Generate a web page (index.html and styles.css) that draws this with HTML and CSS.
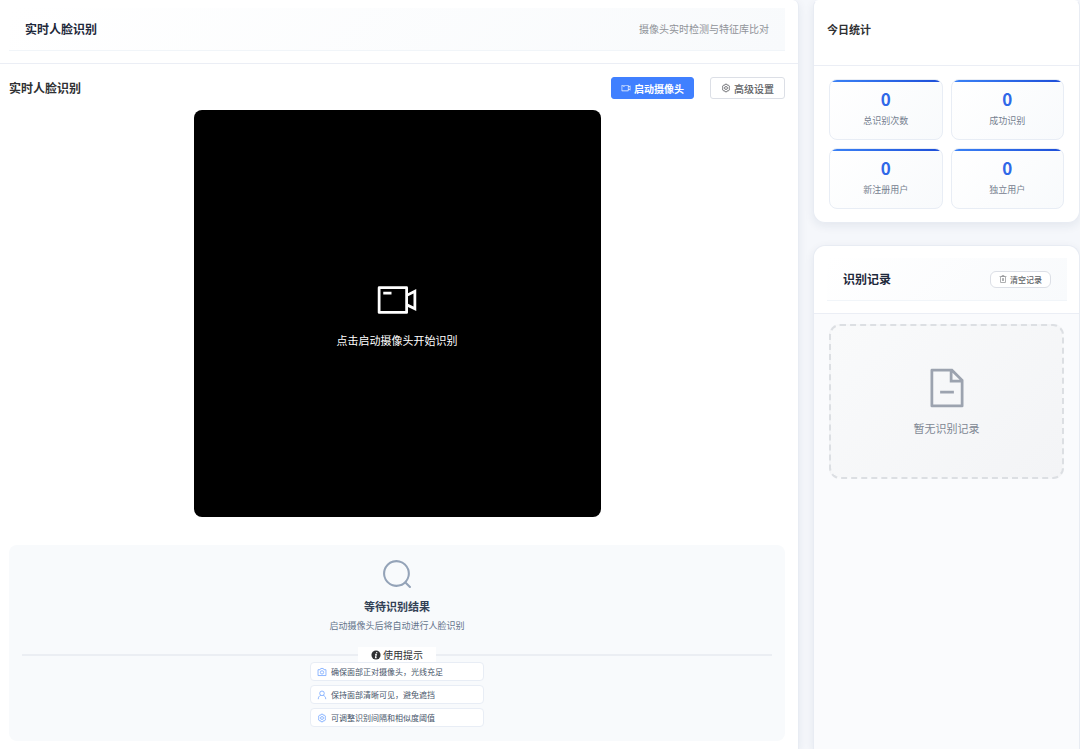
FILE: index.html
```
<!DOCTYPE html>
<html lang="zh-CN">
  <head>
    <meta charset="utf-8" />
    <meta name="viewport" content="width=device-width, initial-scale=1.0" />
    <title>实时人脸识别</title>
    <link rel="stylesheet" href="styles.css">
  </head>

  <body>
    <svg class="sprite" aria-hidden="true">
      <symbol id="icon-camera" viewBox="0 0 1024 1024">
        <path d="M704 768V256H128v512h576zm64-416 192-96v512l-192-96v128a32 32 0 0 1-32 32H96a32 32 0 0 1-32-32V224a32 32 0 0 1 32-32h640a32 32 0 0 1 32 32v128zm0 71.552v176.896l128 64V359.552l-128 64zM192 320h192v64H192v-64z" />
      </symbol>
      <symbol id="icon-setting" viewBox="0 0 24 24">
        <path class="line" d="M9.500 3h5l1 2.500 2.700-.3 2.500 4.300-1.700 2.500 1.700 2.500-2.500 4.300-2.700-.3-1 2.500h-5l-1-2.500-2.700.3-2.500-4.300L5 12 3.300 9.500l2.500-4.300 2.700.3z" />
        <circle class="line" cx="12" cy="12" r="3.500" />
      </symbol>
    </svg>

    <div class="page">
      <main class="card main-card">
        <header class="card-header">
          <div class="header-bar">
            <h1>实时人脸识别</h1>
            <span class="subtitle">摄像头实时检测与特征库比对</span>
          </div>
        </header>

        <div class="main-body">
          <div class="toolbar">
            <h2>实时人脸识别</h2>
            <div class="toolbar-actions">
              <button type="button" class="btn btn-primary">
                <svg class="icon"><use href="#icon-camera" /></svg>启动摄像头
              </button>
              <button type="button" class="btn">
                <svg class="icon"><use href="#icon-setting" /></svg>高级设置
              </button>
            </div>
          </div>

          <div class="video">
            <svg class="icon icon-large"><use href="#icon-camera" /></svg>
            <p>点击启动摄像头开始识别</p>
          </div>

          <section class="result">
            <svg class="icon result-icon" viewBox="0 0 1024 1024">
              <path d="m795.904 750.720 124.992 124.928a32 32 0 0 1-45.248 45.248L750.656 795.904a416 416 0 1 1 45.248-45.248zM480 832a352 352 0 1 0 0-704 352 352 0 0 0 0 704z" />
            </svg>
            <h3>等待识别结果</h3>
            <p class="result-text">启动摄像头后将自动进行人脸识别</p>

            <div class="divider">
              <span class="divider-text">
                <svg class="icon" viewBox="0 0 24 24">
                  <circle cx="12" cy="12" r="11" />
                  <path class="info-mark" d="M14 5l-.5 2.500M10 10.500h2.500L11 18h2.500" />
                </svg>使用提示
              </span>
            </div>

            <ul class="tips">
              <li>
                <svg class="icon" viewBox="0 0 24 24">
                  <path class="line" d="M2.500 6.500h5L9 3.500h6l1.500 3h5v14h-19z" />
                  <circle class="line" cx="12" cy="13" r="4" />
                </svg>确保面部正对摄像头，光线充足
              </li>
              <li>
                <svg class="icon" viewBox="0 0 24 24">
                  <circle class="line" cx="12" cy="8" r="5.500" />
                  <path class="line" d="M3 22c0-5 2.500-8 6-9M21 22c0-5-2.500-8-6-9" />
                </svg>保持面部清晰可见，避免遮挡
              </li>
              <li>
                <svg class="icon"><use href="#icon-setting" /></svg>可调整识别间隔和相似度阈值
              </li>
            </ul>
          </section>
        </div>
      </main>

      <aside class="sidebar">
        <section class="card stats-card">
          <header class="stats-header">
            <h2>今日统计</h2>
          </header>
          <div class="stats">
            <div class="stat"><strong>0</strong><span>总识别次数</span></div>
            <div class="stat"><strong>0</strong><span>成功识别</span></div>
            <div class="stat"><strong>0</strong><span>新注册用户</span></div>
            <div class="stat"><strong>0</strong><span>独立用户</span></div>
          </div>
        </section>

        <section class="card records-card">
          <header class="card-header">
            <div class="header-bar">
              <h2>识别记录</h2>
              <button type="button" class="btn btn-small">
                <svg class="icon" viewBox="0 0 1024 1024">
                  <path d="M160 256H96a32 32 0 0 1 0-64h256V95.936a32 32 0 0 1 32-32h256a32 32 0 0 1 32 32V192h256a32 32 0 1 1 0 64h-64v672a32 32 0 0 1-32 32H192a32 32 0 0 1-32-32V256zm448-64v-64H416v64h192zM224 896h576V256H224v640zm192-128a32 32 0 0 1-32-32V416a32 32 0 0 1 64 0v320a32 32 0 0 1-32 32zm192 0a32 32 0 0 1-32-32V416a32 32 0 0 1 64 0v320a32 32 0 0 1-32 32z" />
                </svg>清空记录
              </button>
            </div>
          </header>
          <div class="records">
            <div class="empty">
              <svg class="icon icon-large" viewBox="0 0 1024 1024">
                <path d="M805.504 320 640 154.496V320h165.504zM832 384H576V128H192v768h640V384zM160 64h480l256 256v608a32 32 0 0 1-32 32H160a32 32 0 0 1-32-32V96a32 32 0 0 1 32-32zm192 512h320v64H352v-64z" />
              </svg>
              <p>暂无识别记录</p>
            </div>
          </div>
        </section>
      </aside>
    </div>
  </body>
</html>
```

FILE: styles.css
```
* {
  box-sizing: border-box;
}

body {
  margin: 0;
  background: #f5f7fb;
  color: #303133;
  font-family: "Noto Sans CJK SC", sans-serif;
  font-size: 10px;
  line-height: 16px;
}

h1,
h2,
h3,
p,
ul {
  margin: 0;
  padding: 0;
}

h1,
h2 {
  font-size: 12px;
  font-weight: 700;
  line-height: 18px;
}

.sprite {
  display: none;
}

.icon {
  width: 10px;
  height: 10px;
  flex: none;
  fill: currentColor;
}

.icon-large {
  width: 44px;
  height: 44px;
}

.line {
  fill: none;
  stroke: currentColor;
  stroke-width: 2;
}

.page {
  display: grid;
  grid-template-columns: 1fr 267px;
  gap: 14px;
  min-height: 100vh;
}

.card {
  background: #fff;
  border: 1px solid #e8ecf3;
  border-top-color: #fff;
  border-radius: 6px 6px 12px 12px;
  box-shadow: 0 3px 10px rgba(30, 50, 90, 0.08);
}

.card-header {
  padding: 12px;
  border-bottom: 1px solid #ebeef5;
}

.header-bar {
  display: flex;
  align-items: center;
  justify-content: space-between;
  height: 43px;
  padding: 0 16px;
  border-bottom: 1px solid #f1f5f9;
  background: linear-gradient(135deg, #fff, #f8fafc);
  color: #1e293b;
}

/* main panel */

.main-card {
  border-width: 0 1px 0 0;
  border-radius: 0 6px 0 0;
}

.main-card .card-header {
  padding: 8px 13px 12px 9px;
}

.subtitle {
  color: #909399;
}

.main-body {
  padding: 13px 13px 8px 9px;
}

.toolbar,
.toolbar-actions {
  display: flex;
  align-items: center;
}

.toolbar {
  justify-content: space-between;
}

.toolbar-actions {
  gap: 16px;
}

.btn {
  display: flex;
  align-items: center;
  gap: 3px;
  height: 22px;
  padding: 0 10px;
  border: 1px solid #dcdfe6;
  border-radius: 3px;
  background: #fff;
  color: #606266;
  font-family: inherit;
  font-size: 10px;
  font-weight: 500;
  cursor: pointer;
}

.btn-primary {
  padding: 0 9px;
  border-color: #4080ff;
  background: #4080ff;
  color: #fff;
  font-weight: 700;
}

.btn-small {
  height: 17px;
  padding: 0 8px;
  border-radius: 6px;
  font-size: 8px;
}

.btn-small .icon {
  width: 8px;
  height: 8px;
}

.video {
  display: flex;
  flex-direction: column;
  align-items: center;
  justify-content: center;
  gap: 10px;
  width: 100%;
  max-width: 407px;
  aspect-ratio: 1;
  margin: 11px auto 28px;
  padding-bottom: 2px;
  border-radius: 8px;
  background: #000;
  color: #fff;
  font-size: 11px;
}

.result {
  display: flex;
  flex-direction: column;
  align-items: center;
  padding: 13px 13px 14px;
  border-radius: 8px;
  background: #f8fafc;
}

.result-icon {
  width: 33px;
  height: 33px;
  color: #94a3b8;
}

.result h3 {
  margin-top: 7px;
  color: #334155;
  font-size: 11px;
  font-weight: 700;
  line-height: 16px;
}

.result-text {
  margin-top: 4px;
  color: #64748b;
  font-size: 9px;
  line-height: 15px;
}

.divider {
  display: flex;
  align-items: center;
  align-self: stretch;
  height: 15px;
  margin-top: 14px;
}

.divider::before,
.divider::after {
  content: "";
  flex: 1;
  height: 2px;
  background: #ebeef3;
}

.divider-text {
  display: flex;
  align-items: center;
  gap: 2px;
  padding: 0 13px;
  background: #fff;
}

.info-mark {
  fill: none;
  stroke: #fff;
  stroke-width: 3;
}

.tips {
  display: flex;
  flex-direction: column;
  gap: 4px;
  width: 174px;
  list-style: none;
}

.tips li {
  display: flex;
  align-items: center;
  gap: 4px;
  height: 19px;
  padding: 0 6px;
  border: 1px solid #e8edf5;
  border-radius: 4px;
  background: #fff;
  color: #475569;
  font-size: 8px;
}

.tips .icon {
  color: #79a9ff;
}

/* sidebar */

.sidebar {
  display: flex;
  flex-direction: column;
  gap: 22px;
}

.stats-header {
  padding: 19px 13px 27px;
  border-bottom: 1px solid #ebeef5;
}

.stats-header h2 {
  font-size: 11px;
}

.stats {
  display: grid;
  grid-template-columns: 1fr 1fr;
  gap: 8px;
  padding: 13px 15px;
}

.stat {
  position: relative;
  display: flex;
  flex-direction: column;
  align-items: center;
  height: 61px;
  padding-top: 9px;
  overflow: hidden;
  border: 1px solid #e8edf5;
  border-radius: 8px;
  background: linear-gradient(135deg, #fff, #f8fafc);
}

.stat::before {
  content: "";
  position: absolute;
  top: 0;
  left: 0;
  right: 0;
  height: 2px;
  background: linear-gradient(90deg, #3b82f6, #1d4ed8);
}

.stat strong {
  color: #2f68e8;
  font-size: 17px;
  line-height: 20px;
}

.stat span {
  margin-top: 4px;
  color: #75808f;
  font-size: 9px;
}

.records-card {
  flex: 1;
  border-top-color: #e8ecf3;
  border-radius: 12px 12px 0 0;
  border-bottom: 0;
  background: #fafbfd;
}

.records-card .card-header {
  padding: 12px 12px 12px 13px;
  border-radius: 12px 12px 0 0;
  background: #fff;
}

.records {
  padding: 10px 15px;
}

.empty {
  display: flex;
  flex-direction: column;
  align-items: center;
  justify-content: center;
  gap: 10px;
  height: 155px;
  padding-bottom: 2px;
  border: 2px dashed #dcdfe3;
  border-radius: 11px;
  background: linear-gradient(135deg, #f9fafb, #f3f4f6);
  color: #808793;
  font-size: 11px;
}

.empty .icon {
  color: #9ca3af;
}
```
